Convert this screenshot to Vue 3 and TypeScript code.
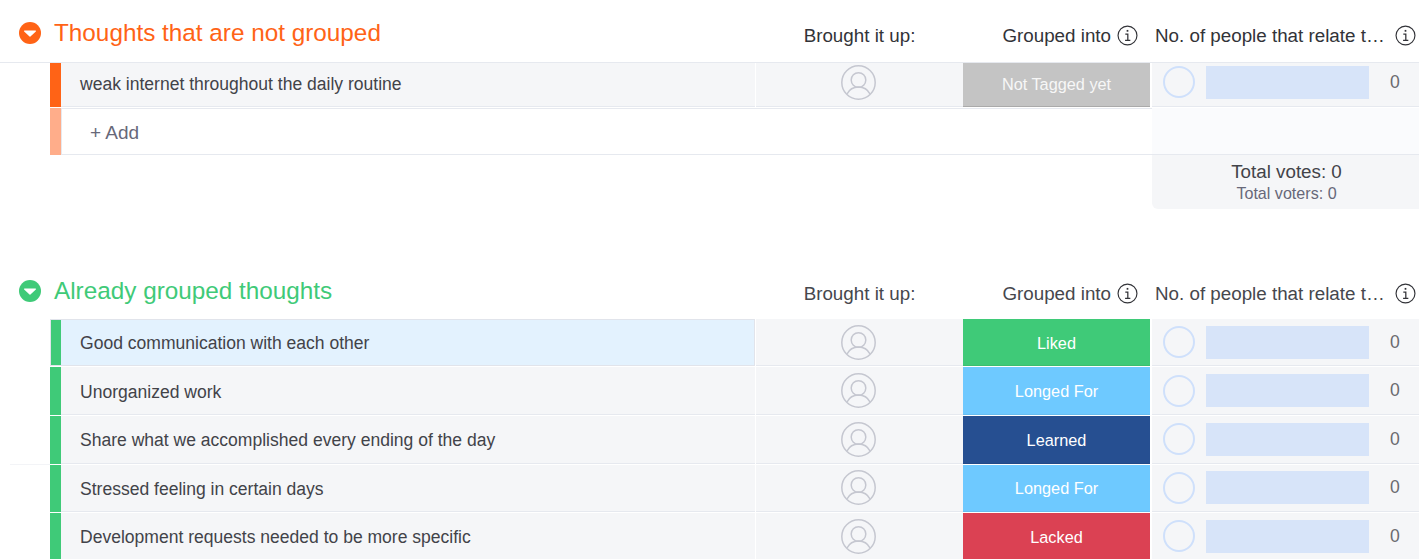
<script setup lang="ts">
interface Thought {
  text: string
  status: string
  tone: string
}

const grouped: Thought[] = [
  { text: 'Good communication with each other', status: 'Liked', tone: 'liked' },
  { text: 'Unorganized work', status: 'Longed For', tone: 'longed' },
  { text: 'Share what we accomplished every ending of the day', status: 'Learned', tone: 'learned' },
  { text: 'Stressed feeling in certain days', status: 'Longed For', tone: 'longed' },
  { text: 'Development requests needed to be more specific', status: 'Lacked', tone: 'lacked' }
]

const personPaths = [
  'M17.5 7.7a7.3 7.3 0 1 1 0 14.6a7.3 7.3 0 1 1 0-14.6z',
  'M6 29c2.5-5 7-7 11.5-7s9 2 11.5 7'
]
</script>

<template>
  <main class="page">
    <section class="group first">
      <header class="head head-line">
        <div class="title-wrap orange">
          <svg class="caret" viewBox="0 0 22 22" aria-hidden="true">
            <circle cx="11" cy="11" r="11" fill="currentColor" />
            <path d="M5.6 8.4h10.8a.6.6 0 0 1 .45 1l-5.4 5.2a.6.6 0 0 1-.9 0L5.15 9.4a.6.6 0 0 1 .45-1z" fill="#fff" />
          </svg>
          <h2 class="title">Thoughts that are not grouped</h2>
        </div>
        <div class="label person-label">Brought it up:</div>
        <div class="label status-label">
          <span>Grouped into</span>
          <svg class="info" viewBox="0 0 20 20" aria-hidden="true">
            <circle cx="10" cy="10" r="9" />
            <path class="info-stem" d="M7.9 8.7h2.4v5.6M7.7 14.6h5" />
            <rect class="info-dot" x="9.2" y="4.7" width="1.6" height="1.7" />
          </svg>
        </div>
        <div class="label votes-label">
          <span class="clip">No. of people that relate to this thought</span>
          <svg class="info" viewBox="0 0 20 20" aria-hidden="true">
            <circle cx="10" cy="10" r="9" />
            <path class="info-stem" d="M7.9 8.7h2.4v5.6M7.7 14.6h5" />
            <rect class="info-dot" x="9.2" y="4.7" width="1.6" height="1.7" />
          </svg>
        </div>
      </header>

      <div class="row short">
        <div class="bar orange-bar"></div>
        <div class="cell name">weak internet throughout the daily routine</div>
        <div class="cell person">
          <svg class="avatar" viewBox="0 0 35 35" aria-hidden="true">
            <circle cx="17.5" cy="17.5" r="16.7" />
            <path v-for="d in personPaths" :key="d" :d="d" />
          </svg>
        </div>
        <div class="status untagged">Not Tagged yet</div>
        <div class="cell votes">
          <span class="ring"></span>
          <span class="meter"></span>
          <span class="count">0</span>
        </div>
      </div>

      <div class="add-row">
        <div class="bar peach-bar"></div>
        <div class="add-cell">+ Add</div>
        <div class="add-votes"></div>
      </div>

      <div class="summary-row">
        <div class="summary">
          <div class="total">Total votes: 0</div>
          <div class="voters">Total voters: 0</div>
        </div>
      </div>
    </section>

    <section class="group second">
      <header class="head">
        <div class="title-wrap green">
          <svg class="caret" viewBox="0 0 22 22" aria-hidden="true">
            <circle cx="11" cy="11" r="11" fill="currentColor" />
            <path d="M5.6 8.4h10.8a.6.6 0 0 1 .45 1l-5.4 5.2a.6.6 0 0 1-.9 0L5.15 9.4a.6.6 0 0 1 .45-1z" fill="#fff" />
          </svg>
          <h2 class="title">Already grouped thoughts</h2>
        </div>
        <div class="label muted person-label">Brought it up:</div>
        <div class="label muted status-label">
          <span>Grouped into</span>
          <svg class="info" viewBox="0 0 20 20" aria-hidden="true">
            <circle cx="10" cy="10" r="9" />
            <path class="info-stem" d="M7.9 8.7h2.4v5.6M7.7 14.6h5" />
            <rect class="info-dot" x="9.2" y="4.7" width="1.6" height="1.7" />
          </svg>
        </div>
        <div class="label muted votes-label">
          <span class="clip">No. of people that relate to this thought</span>
          <svg class="info" viewBox="0 0 20 20" aria-hidden="true">
            <circle cx="10" cy="10" r="9" />
            <path class="info-stem" d="M7.9 8.7h2.4v5.6M7.7 14.6h5" />
            <rect class="info-dot" x="9.2" y="4.7" width="1.6" height="1.7" />
          </svg>
        </div>
      </header>

      <div class="rows">
        <span class="stray-line"></span>
        <div v-for="(item, i) in grouped" :key="item.text" class="row tall" :class="{ active: i === 0 }">
          <div class="bar green-bar"></div>
          <div class="cell name">{{ item.text }}</div>
          <div class="cell person">
            <svg class="avatar" viewBox="0 0 35 35" aria-hidden="true">
              <circle cx="17.5" cy="17.5" r="16.7" />
              <path v-for="d in personPaths" :key="d" :d="d" />
            </svg>
          </div>
          <div class="status" :class="item.tone">{{ item.status }}</div>
          <div class="cell votes">
            <span class="ring"></span>
            <span class="meter"></span>
            <span class="count">0</span>
          </div>
        </div>
      </div>
    </section>
  </main>
</template>

<style>
html,
body {
  margin: 0;
  background: #fff;
  overflow: hidden;
}
</style>

<style scoped>
.page {
  width: 1419px;
  height: 559px;
  overflow: hidden;
  font-family: "Liberation Sans", Arial, sans-serif;
  color: #323338;
}
.group.first {
  height: 258px;
}
.head {
  display: flex;
  height: 60.8px;
}
.head-line {
  height: 63px;
  box-sizing: border-box;
  border-bottom: 1px solid #e6e9ef;
}
.title-wrap {
  width: 756px;
  box-sizing: border-box;
  padding: 0 0 0 19px;
  display: flex;
  align-items: center;
  gap: 13px;
  height: 66px;
}
.orange {
  color: #ff6316;
}
.green {
  color: #3fca78;
}
.caret {
  width: 22px;
  height: 22px;
  flex: none;
}
.title {
  margin: 0;
  font-size: 24.3px;
  font-weight: 400;
  line-height: 30px;
}
.label {
  display: flex;
  align-items: center;
  height: 71px;
  font-size: 18.8px;
  color: #323338;
}
.muted {
  color: #46474d;
}
.person-label {
  width: 207px;
  justify-content: center;
}
.status-label {
  width: 189px;
  box-sizing: border-box;
  padding-right: 14px;
  justify-content: flex-end;
  gap: 6px;
}
.votes-label {
  width: 267px;
  box-sizing: border-box;
  padding: 0 1px 0 3px;
  gap: 8px;
}
.clip {
  width: 232px;
  flex: none;
  white-space: nowrap;
  overflow: hidden;
  text-overflow: ellipsis;
}
.info {
  width: 21px;
  height: 21px;
  flex: none;
  fill: none;
  stroke: #323338;
  stroke-width: 1.1;
}
.info-stem {
  stroke-width: 1.2;
}
.info-dot {
  fill: #323338;
  stroke: none;
}
.row {
  display: flex;
  margin-bottom: 1px;
  margin-left: 50px;
}
.short {
  height: 44px;
}
.tall {
  height: 47.6px;
}
.rows {
  position: relative;
}
.stray-line {
  position: absolute;
  left: 10px;
  top: 145px;
  width: 40px;
  height: 1px;
  background: #f3f4f7;
}
.bar {
  width: 11px;
  flex: none;
  box-sizing: border-box;
}
.orange-bar {
  background: #ff6316;
}
.peach-bar {
  background: #ffad8a;
}
.green-bar {
  background: #3fca78;
}
.cell {
  background: #f5f6f8;
  border-bottom: 1px solid #e6e9ef;
  box-sizing: border-box;
}
.name {
  width: 694px;
  flex: none;
  display: flex;
  align-items: center;
  padding-left: 19px;
  padding-top: 3px;
  font-size: 17.55px;
  color: #424349;
}
.person {
  width: 207px;
  margin-left: 1px;
  padding-right: 2px;
  flex: none;
  display: flex;
  align-items: center;
  justify-content: center;
}
.avatar {
  width: 35px;
  height: 35px;
  fill: none;
  stroke: #c5c7d0;
  stroke-width: 1.5;
}
.status {
  width: 187px;
  flex: none;
  display: flex;
  align-items: center;
  justify-content: center;
  box-sizing: border-box;
  padding-top: 2px;
  color: #fff;
  font-size: 16.3px;
  border-bottom: 1px solid rgba(0, 0, 0, 0.06);
}
.untagged {
  background: #c4c4c4;
  border-bottom-color: #aaa;
  height: 44px;
  padding-top: 0;
  color: #f7f7f7;
}
.liked {
  background: #3fca78;
}
.longed {
  background: #6ec9ff;
}
.learned {
  background: #264f91;
}
.lacked {
  background: #db4153;
}
.votes {
  flex: 1;
  margin-left: 2px;
  display: flex;
  align-items: center;
  padding: 0 10px 0 11px;
}
.short .person,
.short .votes {
  padding-bottom: 5px;
}
.short .name {
  padding-top: 0;
  padding-bottom: 1px;
}
.ring {
  width: 32px;
  height: 32px;
  box-sizing: border-box;
  border: 2px solid #cfe0fb;
  border-radius: 50%;
  flex: none;
}
.meter {
  width: 163px;
  height: 33px;
  margin-left: 11px;
  background: #d7e4f9;
  flex: none;
}
.count {
  margin-left: 21px;
  font-size: 17.6px;
  color: #6a6a6f;
}
.active .bar {
  border: 1px solid #e1e4eb;
  border-right: 0;
  background-clip: padding-box;
  background-color: #3fca78;
}
.active .name {
  background: #e3f2fe;
  border: 1px solid #e1e4eb;
  border-left: 0;
  padding-top: 1px;
}
.add-row {
  display: flex;
  height: 47px;
  margin-left: 50px;
}
.add-cell {
  width: 1091px;
  flex: none;
  box-sizing: border-box;
  border: 1px solid #e6e9ef;
  border-right: 0;
  padding-left: 28px;
  padding-top: 2px;
  display: flex;
  align-items: center;
  font-size: 19px;
  color: #676879;
}
.add-votes {
  flex: 1;
  background: #fafbfd;
  border-bottom: 1px solid #e6e9ef;
}
.summary-row {
  display: flex;
  justify-content: flex-end;
}
.summary {
  width: 267px;
  height: 54px;
  background: #f5f6f8;
  border-bottom-left-radius: 6px;
  text-align: center;
  padding: 6px 0 0 2px;
  box-sizing: border-box;
}
.total {
  font-size: 18.8px;
  line-height: 21px;
  color: #424349;
}
.voters {
  font-size: 16.1px;
  line-height: 22px;
  color: #676879;
}
</style>
